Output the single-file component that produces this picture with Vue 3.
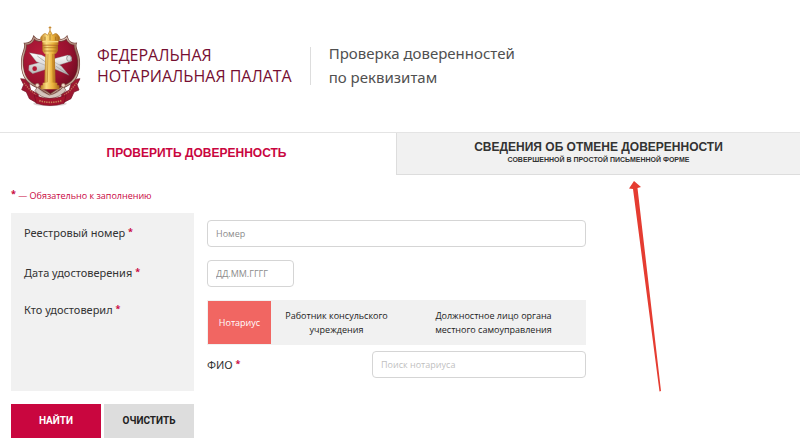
<script setup>
import { ref } from 'vue'

const number = ref('')
const date = ref('')
const notary = ref('')
const certifiers = [
  { id: 'notary', lines: ['Нотариус'] },
  { id: 'consul', lines: ['Работник консульского', 'учреждения'] },
  { id: 'official', lines: ['Должностное лицо органа', 'местного самоуправления'] },
]
const certifier = ref('notary')

function clearForm() {
  number.value = ''
  date.value = ''
  notary.value = ''
  certifier.value = 'notary'
}
</script>

<template>
  <div class="page">
    <header class="header">
      <svg class="crest" viewBox="54 30 198 246" aria-hidden="true">
        <defs>
          <linearGradient id="gold" x1="0" x2="1">
            <stop offset="0" stop-color="#b97a20" />
            <stop offset=".3" stop-color="#fbdc80" />
            <stop offset=".65" stop-color="#eab23c" />
            <stop offset="1" stop-color="#a5661a" />
          </linearGradient>
          <linearGradient id="rim" x1="0" y1="0" x2="1" y2="1">
            <stop offset="0" stop-color="#8c5a4c" />
            <stop offset=".3" stop-color="#f4e2d8" />
            <stop offset=".6" stop-color="#9b6a5c" />
            <stop offset="1" stop-color="#e8cfc2" />
          </linearGradient>
          <radialGradient id="field" cx=".35" cy=".3" r=".8">
            <stop offset="0" stop-color="#b81c3c" />
            <stop offset=".6" stop-color="#99122f" />
            <stop offset="1" stop-color="#5c0a1c" />
          </radialGradient>
          <linearGradient id="paper" x1="0" y1="0" x2="0" y2="1">
            <stop offset="0" stop-color="#ffffff" />
            <stop offset="1" stop-color="#b9b6b6" />
          </linearGradient>
        </defs>
        <ellipse cx="150" cy="266" rx="50" ry="8" fill="#ddd6d6" />
        <path d="M62 191L85 194L92 225L116 238L109 263L88 251L79 231L65 224L71 209Z" fill="#9d1730" stroke="#711024" stroke-width="2" />
        <path d="M240 191L217 194L208 225L184 238L190 263L213 251L222 231L237 225L231 209Z" fill="#9d1730" stroke="#711024" stroke-width="2" />
        <path d="M102 68C112 80 124 78 135 67L165 67C176 79 190 79 200 68C204 82 216 88 226 87C222 101 235 114 236 136C238 172 225 199 201 210C181 219 166 228 151 240C136 228 120 219 101 210C78 198 65 172 67 136C67 115 80 101 76 87C88 87 98 80 102 68Z" fill="url(#field)" stroke="#704138" stroke-width="8" />
        <path d="M102 68C112 80 124 78 135 67L165 67C176 79 190 79 200 68C204 82 216 88 226 87C222 101 235 114 236 136C238 172 225 199 201 210C181 219 166 228 151 240C136 228 120 219 101 210C78 198 65 172 67 136C67 115 80 101 76 87C88 87 98 80 102 68Z" fill="none" stroke="url(#rim)" stroke-width="4" />
        <path d="M87 151L204 120L214 126L215 138L98 176L86 166Z" fill="url(#paper)" stroke="#777" stroke-width="1" />
        <path d="M88 113L125 120L184 153L207 181L173 166L109 140Z" fill="url(#paper)" stroke="#777" stroke-width="1" />
        <path d="M112 123L142 145M168 154L201 176" stroke="#999" stroke-width="2" />
        <ellipse cx="207" cy="130" rx="7" ry="9" fill="#ddd" stroke="#777" stroke-width="2" />
        <circle cx="104" cy="161" r="7" fill="#b31834" />
        <path d="M136 112H164L167 205H133Z" fill="url(#gold)" />
        <path d="M144 115L142 202M158 115L160 202" stroke="#bb7b21" stroke-width="2" />
        <path d="M127 91H174V107L168 116H133L127 107Z" fill="url(#gold)" />
        <path d="M131 98H170M132 108H169" stroke="#a86b1b" stroke-width="2" />
        <path d="M126 62Q135 50 143 61L150 46L158 61Q168 50 176 62Q184 70 174 79V90H128V79Q117 70 126 62Z" fill="url(#gold)" stroke="#b67820" stroke-width="2" />
        <path d="M135 65V76M150 57V76M167 65V76" stroke="#92601b" stroke-width="2" />
        <path d="M127 80H175" stroke="#f9dc83" stroke-width="4" />
        <path d="M150 34V46M146 38H154" stroke="#c28022" stroke-width="3" />
        <path d="M128 203H172V211H178V223H122V211H128Z" fill="url(#gold)" />
        <path d="M112 216Q125 232 148 240Q174 235 190 215L198 226Q181 247 150 252Q119 247 105 227Z" fill="#d4c4bc" stroke="#744739" stroke-width="2" />
        <path d="M103 241Q148 260 198 241L192 265Q150 278 109 265Z" fill="#a4152d" stroke="#730e21" stroke-width="2" />
        <path d="M118 257Q151 267 184 257" fill="none" stroke="#c78659" stroke-width="5" stroke-dasharray="4 3" />
        <path d="M72 204L91 226L108 239M230 204L209 228L193 240" fill="none" stroke="#bd7055" stroke-width="4" stroke-dasharray="4 3" />
        <circle cx="112" cy="211" r="6" fill="#f0d7c7" stroke="#875848" stroke-width="2" />
        <circle cx="190" cy="211" r="6" fill="#f0d7c7" stroke="#875848" stroke-width="2" />
      </svg>
      <div class="brand">ФЕДЕРАЛЬНАЯ<br />НОТАРИАЛЬНАЯ ПАЛАТА</div>
      <h1 class="title">Проверка доверенностей<br />по реквизитам</h1>
    </header>

    <nav class="tabs">
      <button type="button" class="tab active">ПРОВЕРИТЬ ДОВЕРЕННОСТЬ</button>
      <button type="button" class="tab">
        СВЕДЕНИЯ ОБ ОТМЕНЕ ДОВЕРЕННОСТИ
        <small>СОВЕРШЕННОЙ В ПРОСТОЙ ПИСЬМЕННОЙ ФОРМЕ</small>
      </button>
      <svg class="arrow" viewBox="0 0 34 212" aria-hidden="true">
        <path d="M6 0L13 6L9.500 7L33 210L31.500 210.500L5 8L1 7.500Z" fill="#e53c31" />
      </svg>
    </nav>

    <form class="form" @submit.prevent>
      <p class="note"><b>*</b> — Обязательно к заполнению</p>
      <div class="row">
        <label class="name" for="number">Реестровый номер <b>*</b></label>
        <div class="field"><input id="number" v-model="number" type="text" placeholder="Номер" /></div>
      </div>
      <div class="row">
        <label class="name" for="date">Дата удостоверения <b>*</b></label>
        <div class="field"><input id="date" v-model="date" class="date" type="text" placeholder="ДД.ММ.ГГГГ" /></div>
      </div>
      <div class="row last">
        <div id="who" class="name">Кто удостоверил <b>*</b></div>
        <div class="field">
          <div class="segments" role="group" aria-labelledby="who">
            <button
              v-for="item in certifiers"
              :key="item.id"
              type="button"
              :class="['segment', { chosen: certifier === item.id }]"
              :aria-pressed="certifier === item.id"
              @click="certifier = item.id"
            >
              <span v-for="line in item.lines" :key="line">{{ line }}</span>
            </button>
          </div>
          <div class="person">
            <label for="notary">ФИО <b>*</b></label>
            <input id="notary" v-model="notary" class="search" type="text" placeholder="Поиск нотариуса" />
          </div>
        </div>
      </div>
      <div class="actions">
        <button type="submit" class="find">НАЙТИ</button>
        <button type="button" class="clear" @click="clearForm">ОЧИСТИТЬ</button>
      </div>
    </form>
  </div>
</template>

<style>
body {
  background: #fff;
}
</style>

<style scoped>
.page {
  font-family: "Open Sans", "Noto Sans", sans-serif;
  font-size: 11px;
  color: #333;
}
.page * {
  box-sizing: border-box;
}
button,
input {
  margin: 0;
  font: inherit;
}
b {
  color: #c9063f;
  font-size: 9px;
  line-height: 0;
  vertical-align: 2px;
}
.header {
  display: flex;
  align-items: center;
  padding: 24px 18px;
}
.crest {
  width: 66px;
  height: 84px;
}
.brand {
  margin-left: 13px;
  padding-right: 18px;
  font-size: 16px;
  line-height: 21px;
  color: #760f32;
}
.title {
  position: relative;
  margin: 0;
  padding: 0 0 2px 19px;
  font-family: "Noto Sans", sans-serif;
  font-size: 15px;
  font-weight: 400;
  line-height: 24px;
  color: #505050;
}
.title::before {
  content: "";
  position: absolute;
  left: 0;
  top: 6px;
  bottom: 6px;
  border-left: 1px solid #ddd;
}
.tabs {
  position: relative;
  display: flex;
  border-top: 1px solid #e4e4e4;
}
.tab {
  flex: 1;
  height: 42px;
  padding: 0 0 2px;
  border: 0;
  border-left: 1px solid #ddd;
  border-bottom: 1px solid #ddd;
  background: #f1f1f1;
  color: #333;
  font: bold 12px/14px "Liberation Sans", Arial, sans-serif;
}
.tab.active {
  flex: 0 0 396px;
  padding-right: 4px;
  border-color: transparent;
  background: #fff;
  color: #c9063f;
}
.tab small {
  display: block;
  font-size: 7px;
  line-height: 12px;
}
.arrow {
  position: absolute;
  left: 628px;
  top: 48px;
  width: 34px;
  height: 212px;
  pointer-events: none;
}
.form {
  padding: 12px 11px 10px;
}
.note {
  margin: 0 0 8px;
  font-size: 9px;
  line-height: 18px;
  color: #c9063f;
}
.row {
  display: flex;
  max-width: 575px;
  min-height: 40px;
}
.row.last {
  min-height: 98px;
}
.name {
  flex: 0 0 183px;
  padding: 10px 13px;
  background: #f1f1f1;
  line-height: 20px;
}
.name,
.person label {
  font-family: "Noto Sans", sans-serif;
}
.last .name {
  padding-top: 7px;
}
.field {
  flex: 1;
  padding: 7px 0 0 13px;
}
input {
  display: block;
  width: 100%;
  height: 27px;
  padding: 0 8px;
  border: 1px solid #d5d5d5;
  border-radius: 4px;
  background: #fff;
  color: #404040;
  font-size: 9px;
}
input::placeholder {
  color: #8c8c8c;
  opacity: 1;
}
.date {
  width: 87px;
}
.search::placeholder {
  color: #bfbfbf;
}
.segments {
  display: flex;
  height: 45px;
  padding: 1px;
  background: #f1f1f1;
}
.segment {
  flex: 0 0 63px;
  padding: 0;
  border: 0;
  background: transparent;
  color: #222;
  font-size: 9px;
  line-height: 14px;
}
.segment:nth-child(2) {
  flex-basis: 131px;
}
.segment:nth-child(3) {
  flex: 1;
}
.segment.chosen {
  background: #f16662;
  color: #fff;
}
.segment span {
  display: block;
}
.person {
  display: flex;
  align-items: center;
  justify-content: space-between;
  margin-top: 6px;
}
.person .search {
  width: 214px;
}
.actions {
  display: flex;
  gap: 3px;
  width: 183px;
  margin-top: 13px;
}
.actions button {
  flex: 1;
  height: 34px;
  padding: 0;
  border: 0;
  font: bold 10px/14px Roboto, sans-serif;
}
.actions .find {
  background: #c9063f;
  color: #fff;
}
.actions .clear {
  background: #ddd;
  color: #222;
}
</style>
